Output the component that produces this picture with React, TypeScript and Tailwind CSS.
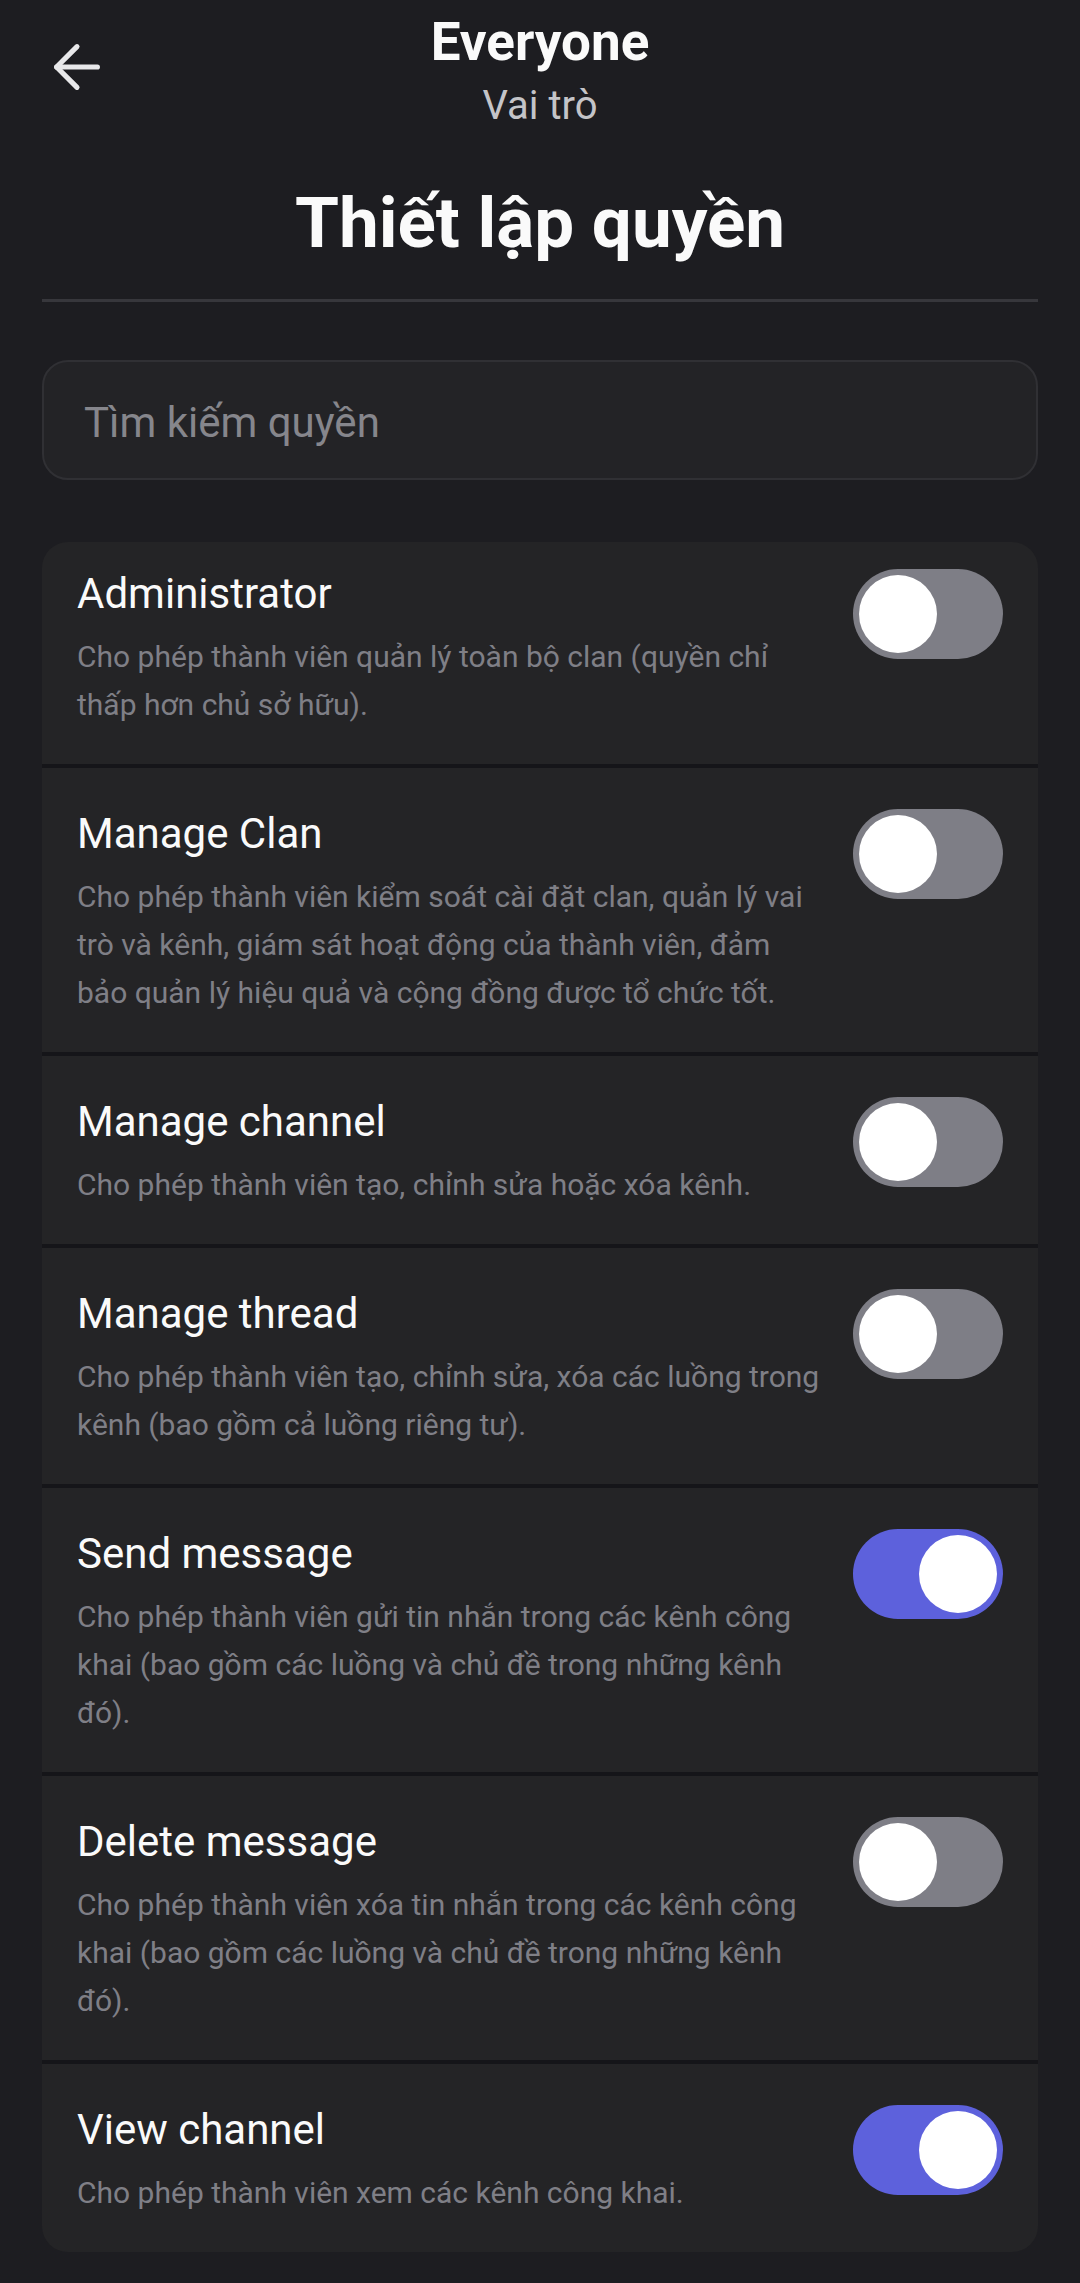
import React, { useState } from "react";
import { ArrowLeft } from "lucide-react";

interface Permission {
  id: string;
  title: string;
  desc: string;
  on: boolean;
}

const permissions: Permission[] = [
  {
    id: "admin",
    title: "Administrator",
    desc: "Cho phép thành viên quản lý toàn bộ clan (quyền chỉ thấp hơn chủ sở hữu).",
    on: false,
  },
  {
    id: "clan",
    title: "Manage Clan",
    desc: "Cho phép thành viên kiểm soát cài đặt clan, quản lý vai trò và kênh, giám sát hoạt động của thành viên, đảm bảo quản lý hiệu quả và cộng đồng được tổ chức tốt.",
    on: false,
  },
  {
    id: "channel",
    title: "Manage channel",
    desc: "Cho phép thành viên tạo, chỉnh sửa hoặc xóa kênh.",
    on: false,
  },
  {
    id: "thread",
    title: "Manage thread",
    desc: "Cho phép thành viên tạo, chỉnh sửa, xóa các luồng trong kênh (bao gồm cả luồng riêng tư).",
    on: false,
  },
  {
    id: "send",
    title: "Send message",
    desc: "Cho phép thành viên gửi tin nhắn trong các kênh công khai (bao gồm các luồng và chủ đề trong những kênh đó).",
    on: true,
  },
  {
    id: "delete",
    title: "Delete message",
    desc: "Cho phép thành viên xóa tin nhắn trong các kênh công khai (bao gồm các luồng và chủ đề trong những kênh đó).",
    on: false,
  },
  {
    id: "view",
    title: "View channel",
    desc: "Cho phép thành viên xem các kênh công khai.",
    on: true,
  },
];

function Toggle({ on, onClick }: { on: boolean; onClick: () => void }) {
  return (
    <button
      type="button"
      onClick={onClick}
      className={`flex h-[90px] w-[150px] shrink-0 items-center rounded-full px-[6px] ${
        on ? "justify-end bg-[#5d61dc]" : "justify-start bg-[#7e7e86]"
      }`}>
      <span className="block h-[78px] w-[78px] rounded-full bg-white"></span>
    </button>
  );
}

export default function App() {
  const [state, setState] = useState<Record<string, boolean>>(
    Object.fromEntries(permissions.map((p) => [p.id, p.on]))
  );
  const [query, setQuery] = useState("");

  return (
    <div className="min-h-screen w-full bg-[#1d1d21] pb-[31px] font-['Roboto',sans-serif] text-white">
      {/* header */}
      <div className="grid grid-cols-[1fr_auto_1fr] pt-[12px]">
        <div className="pl-[42px] pt-[20px]">
          <ArrowLeft size={70} strokeWidth={1.75} color="#e8e8ea" />
        </div>
        <div className="flex flex-col items-center">
          <span className="text-[53px] font-bold leading-[60px] text-[#fafafa]">Everyone</span>
          <span className="mt-[10px] text-[40px] leading-[48px] text-[#c4c4c8]">Vai trò</span>
        </div>
        <div></div>
      </div>
      <h1 className="mt-[50px] text-center text-[71px] font-bold leading-[86px] text-[#fafafa]">
        Thiết lập quyền
      </h1>
      <div className="mx-[42px] mt-[33px] h-[3px] bg-[#37373c]"></div>

      {/* search */}
      <div className="mx-[42px] mt-[58px] flex h-[120px] items-center rounded-[26px] border-2 border-[#303034] bg-[#232326] px-[40px]">
        <input
          value={query}
          onChange={(e) => setQuery(e.target.value)}
          placeholder="Tìm kiếm quyền"
          className="w-full bg-transparent pt-[4px] text-[42px] text-white outline-none placeholder:text-[#86868c]"
        />
      </div>

      {/* permissions */}
      <div className="mx-[42px] mt-[62px] overflow-hidden rounded-[26px] bg-[#242426]">
        {permissions.map((p, i) => (
          <div
            key={p.id}
            className={`flex items-start gap-[30px] pb-[35px] pl-[35px] pr-[35px] ${
              i === 0 ? "pt-[27px]" : "border-t-4 border-[#151519] pt-[41px]"
            }`}>
            <div className="flex-1">
              <div className="text-[42px] leading-[50px] text-[#fafafa]">{p.title}</div>
              <p className="mt-[14px] text-[30px] leading-[48px] text-[#7f7f86]">{p.desc}</p>
            </div>
            <Toggle
              on={state[p.id]}
              onClick={() => setState((s) => ({ ...s, [p.id]: !s[p.id] }))}
            />
          </div>
        ))}
      </div>
    </div>
  );
}
